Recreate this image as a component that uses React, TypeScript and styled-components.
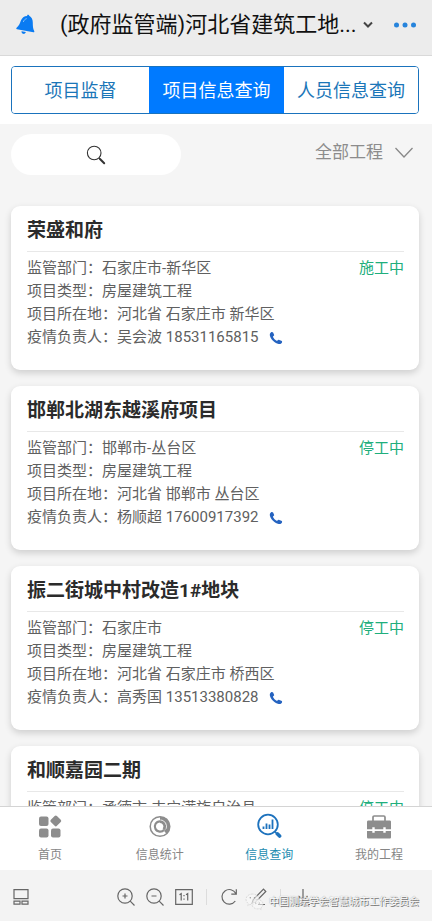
import React from "react";
import styled, { createGlobalStyle, css } from "styled-components";

const GlobalStyle = createGlobalStyle`
  *, *::before, *::after { box-sizing: border-box; }
  html, body, #root { height: 100%; }
  body {
    margin: 0;
    background: #f5f5f5;
    font-family: Roboto, "Noto Sans CJK SC", sans-serif;
    color: #606060;
  }
  button, input, select { font: inherit; color: inherit; }
`;

const Screen = styled.div`
  display: flex;
  flex-direction: column;
  height: 100vh;
  overflow: hidden;
`;

const iconButton = css`
  display: flex;
  align-items: center;
  justify-content: center;
  flex: none;
  padding: 0;
  border: 0;
  background: none;
  cursor: pointer;
`;

const TopBar = styled.header`
  display: flex;
  align-items: center;
  flex: none;
  height: 56px;
  padding: 0 15px 6px 13px;
  background: #ececec;
  border-bottom: 1px solid #d9d9d9;
`;

const TopButton = styled.button`
  ${iconButton}
  width: 24px;
  height: 24px;
`;

const PageTitle = styled.h1`
  flex: 1;
  min-width: 0;
  margin: 0 4px 0 23px;
  overflow: hidden;
  white-space: nowrap;
  font-size: 22px;
  line-height: 32px;
  font-weight: 400;
  color: #111;
`;

const TitleArrow = styled(TopButton)`
  width: 12px;
  margin-right: 19px;
`;

const TabStrip = styled.div`
  flex: none;
  padding: 10px 13px 10px 11px;
  background: #fff;
`;

const Tabs = styled.div`
  display: grid;
  grid-template-columns: 137fr 135fr 134fr;
  height: 48px;
  border: 1px solid #1a73bd;
  border-radius: 4px;
  overflow: hidden;
`;

const Tab = styled.button<{ $active?: boolean }>`
  padding: 0 0 2px;
  border: 0;
  background: ${(p) => (p.$active ? "#007aff" : "#fff")};
  color: ${(p) => (p.$active ? "#fff" : "#1b76b8")};
  font-size: 18px;
  white-space: nowrap;
  cursor: pointer;
`;

const FilterBar = styled.div`
  display: flex;
  align-items: center;
  justify-content: space-between;
  flex: none;
  padding: 10px 18px 10px 11px;
`;

const SearchBox = styled.label`
  display: grid;
  place-items: center;
  flex: 0 1 170px;
  height: 41px;
  background: #fff;
  border-radius: 21px;

  & > * { grid-area: 1 / 1; }
`;

const SearchInput = styled.input`
  width: 100%;
  height: 100%;
  padding: 0 18px;
  border: 0;
  border-radius: 21px;
  background: transparent;
  font-size: 15px;
`;

const FilterLabel = styled.label`
  display: flex;
  align-items: center;
  gap: 11px;
  margin-bottom: 6px;
  color: #8c8c8c;
`;

const FilterSelect = styled.select`
  appearance: none;
  padding: 0;
  border: 0;
  background: transparent;
  font-size: 17px;
  line-height: 24px;
`;

const CardList = styled.main`
  display: flex;
  flex-direction: column;
  flex: 1;
  gap: 16px;
  min-height: 0;
  padding: 21px 13px 16px 11px;
  overflow-y: auto;
  scrollbar-width: none;
`;

const Card = styled.article`
  flex: none;
  padding: 10px 15px 21px 16px;
  background: #fff;
  border-radius: 9px;
  box-shadow: 0 3px 7px rgba(0, 0, 0, 0.16);
`;

const CardTitle = styled.h2`
  margin: 0 0 5px;
  padding-bottom: 6px;
  border-bottom: 1px solid #e8e8e8;
  font-size: 19px;
  line-height: 29px;
  font-weight: 700;
  color: #2b2b2b;
`;

const Row = styled.div`
  display: flex;
  align-items: center;
  height: 23px;
  font-size: 15px;
  line-height: 23px;
  white-space: nowrap;
`;

const Status = styled.span`
  margin-left: auto;
  color: #20ae7c;
`;

const CallLink = styled.a`
  display: flex;
  margin-left: 10px;
  color: #2563c0;
`;

const NavBar = styled.nav`
  display: flex;
  justify-content: space-between;
  flex: none;
  height: 64px;
  padding: 5px 29px 0 26px;
  background: #fff;
  border-top: 1px solid #d4d4d4;
`;

const NavItem = styled.a<{ $active?: boolean }>`
  display: flex;
  flex-direction: column;
  align-items: center;
  gap: 6px;
  width: 48px;
  font-size: 12px;
  line-height: 18px;
  white-space: nowrap;
  text-decoration: none;
  color: ${(p) => (p.$active ? "#1c8cb0" : "#858585")};
`;

const Toolbar = styled.footer`
  position: relative;
  display: grid;
  grid-template-columns: 1fr auto 1fr;
  align-items: center;
  flex: none;
  height: 51px;
  padding: 2px 15px 0 12px;
  background: #f3f3f3;
`;

const ToolGroup = styled.div`
  display: flex;
  align-items: center;
  gap: 11px;
`;

const ToolButton = styled.button`
  ${iconButton}
  width: 18px;
  height: 20px;
  color: #666;
`;

const Divider = styled.span`
  width: 1px;
  height: 16px;
  margin: 0 2px;
  background: #dcdcdc;
`;

const Watermark = styled.div`
  position: absolute;
  right: 13px;
  bottom: 9px;
  display: flex;
  align-items: center;
  gap: 5px;
  font-size: 10px;
  line-height: 20px;
  white-space: nowrap;
  color: #fff;
  text-shadow: 1px 1px 0 #777, 0 0 1px #888;
  pointer-events: none;
`;

const projects = [
  { name: "荣盛和府", dept: "石家庄市-新华区", area: "河北省 石家庄市 新华区", person: "吴会波", phone: "18531165815", status: "施工中" },
  { name: "邯郸北湖东越溪府项目", dept: "邯郸市-丛台区", area: "河北省 邯郸市 丛台区", person: "杨顺超", phone: "17600917392", status: "停工中" },
  { name: "振二街城中村改造1#地块", dept: "石家庄市", area: "河北省 石家庄市 桥西区", person: "高秀国", phone: "13513380828", status: "停工中" },
  { name: "和顺嘉园二期", dept: "承德市-丰宁满族自治县", area: "河北省 承德市 丰宁满族自治县", person: "", phone: "", status: "停工中" },
];

const BellIcon = () => (
  <svg width="20" height="21" viewBox="0 0 20 21" fill="#0a7bf2" aria-hidden="true">
    <path d="M12.2 1.1c.6-.6 1.9-.3 2 .7 2.400 1.300 3.700 3.800 3.600 7 0 3.200.1 5.800 1.500 8.500.2.700-.2 1.100-.9 1L2 15.200c-.8-.2-1-.9-.4-1.400C3.800 12 4.800 9.700 5.700 7.100c1.100-3.300 3.500-5 6.500-5.100z" />
    <path d="M6.500 17.200l4.400.9c-.5 1.400-1.500 2-2.700 1.700-1.100-.3-1.700-1.200-1.700-2.600z" />
    <path d="M8.300 8c.7-2 1.800-3 3.400-3.400" fill="none" stroke="#8cc4fb" strokeWidth="0.900" />
  </svg>
);

const SearchIcon = () => (
  <svg width="20" height="20" viewBox="0 0 20 20" fill="none" stroke="#333" aria-hidden="true">
    <circle cx="8.200" cy="8" r="6.800" strokeWidth="1.100" />
    <path d="M13 13l1 1" strokeWidth="1.200" />
    <path d="M14 14l4.200 4.200" strokeWidth="2" strokeLinecap="round" />
  </svg>
);

const PhoneIcon = () => (
  <svg width="14" height="14" viewBox="0 0 14 14" fill="currentColor" aria-hidden="true">
    <path d="M2.100 1.300c.7-.5 1.500-.4 2 .3l.9 1.900c.3.700.1 1.200-.5 1.600-.6.500-.6.800-.2 1.500.7 1.300 1.600 2.300 2.900 3 .7.400 1 .3 1.500-.3.400-.6.900-.7 1.600-.4l2 .9c.9.400 1 1.100.6 1.900-.8 1.300-2.300 1.600-4 1C5 11.300 1.800 8.100.9 4.700.6 3.300 1 2.100 2.100 1.300z" />
  </svg>
);

const HomeIcon = () => (
  <svg width="24" height="28" viewBox="0 0 24 28" fill="#8d8d8d" aria-hidden="true">
    <rect x="1" y="4.500" width="9.500" height="9.500" rx="2" />
    <rect x="1" y="16.500" width="9.500" height="9" rx="2" />
    <rect x="13" y="16.500" width="9.500" height="9" rx="2" />
    <rect x="13.500" y="4.600" width="8.600" height="8.600" rx="1.600" transform="rotate(45 17.800 8.900)" />
  </svg>
);

const StatsIcon = () => (
  <svg width="24" height="28" viewBox="0 0 24 28" fill="none" aria-hidden="true">
    <circle cx="12" cy="14.500" r="9.800" stroke="#8d8d8d" strokeWidth="1.500" />
    <path d="M12 4.700a9.800 9.800 0 0 1 6.500 17.100L12 14.500z" fill="#8d8d8d" />
    <circle cx="12" cy="14.500" r="6.300" fill="#fff" />
    <path d="M12 9.300a5.200 5.200 0 1 0 4.200 8.300" stroke="#8d8d8d" strokeWidth="2.200" />
    <path d="M12 8.200a6.300 6.300 0 0 1 5 10l-2.300-1.600a3.500 3.500 0 0 0-2.700-5.600z" fill="#8d8d8d" />
    <path d="M12.500 7.800a6.700 6.700 0 0 1 5.700 9" stroke="#fff" strokeWidth="0.700" />
  </svg>
);

const QueryIcon = () => (
  <svg width="26" height="28" viewBox="0 0 26 28" fill="none" stroke="#1d72bd" aria-hidden="true">
    <circle cx="12" cy="12.500" r="9.800" strokeWidth="1.800" />
    <path d="M7.500 14.500v2.500M10.500 11.500v5.500M13.500 12.500v4.500M16.500 7.500v9.500" strokeWidth="1.800" />
    <path d="M18.800 19.500l1.500 1.500" strokeWidth="1.500" />
    <path d="M21.300 21.800l2.300 2.300" strokeWidth="3.600" strokeLinecap="round" />
  </svg>
);

const CaseIcon = () => (
  <svg width="26" height="28" viewBox="0 0 26 28" fill="#8d8d8d" aria-hidden="true">
    <path d="M7 9V5.200c0-.8.4-1.200 1.200-1.200h9.600c.8 0 1.200.4 1.200 1.200V9" fill="none" stroke="#8d8d8d" strokeWidth="1.700" />
    <path d="M2.500 8.500h21c1 0 1.500.5 1.500 1.500v7.300H1V10c0-1 .5-1.500 1.500-1.500z" />
    <path d="M1 19h24v6c0 1-.5 1.500-1.500 1.500h-21c-1 0-1.500-.5-1.500-1.500z" />
    <path d="M6.300 15.200h2.400v5.600H6.300zM17.300 15.200h2.400v5.600h-2.400z" fill="#fff" />
  </svg>
);

const ToolSvg = ({ children }: { children: React.ReactNode }) => (
  <svg width="18" height="18" viewBox="0 0 18 18" fill="none" stroke="currentColor" strokeWidth="1.200" aria-hidden="true">
    {children}
  </svg>
);

const WechatIcon = () => (
  <svg width="19" height="18" viewBox="0 0 19 18" fill="#f8f8f8" fillOpacity="0.600" stroke="#cfcfcf" strokeWidth="0.700" strokeDasharray="2 1" aria-hidden="true">
    <path d="M7.500 1C3.800 1 1 3.400 1 6.400c0 1.700.9 3.200 2.400 4.200l-.6 2 2.300-1.200c.8.200 1.500.3 2.400.3 3.700 0 6.500-2.300 6.500-5.300S11.200 1 7.500 1z" />
    <path d="M12.500 6.500c-3.100 0-5.500 2-5.500 4.700s2.400 4.700 5.500 4.700c.7 0 1.300-.1 1.900-.3l2 1-.5-1.700c1.300-.9 2.100-2.200 2.100-3.700 0-2.700-2.400-4.700-5.500-4.700z" />
    <g fill="#999" fillOpacity="1" stroke="none">
      <circle cx="5.300" cy="4.800" r=".7" /><circle cx="9.500" cy="4.800" r=".7" />
      <circle cx="10.700" cy="10" r=".6" /><circle cx="14.300" cy="10" r=".6" />
    </g>
  </svg>
);

export default function App() {
  return (
    <Screen>
      <GlobalStyle />
      <TopBar>
        <TopButton aria-label="通知"><BellIcon /></TopButton>
        <PageTitle>(政府监管端)河北省建筑工地...</PageTitle>
        <TitleArrow aria-label="展开">
          <svg width="12" height="10" viewBox="0 0 12 10" fill="none" stroke="#444" strokeWidth="2" aria-hidden="true">
            <path d="M2 2.500l4 4 4-4" />
          </svg>
        </TitleArrow>
        <TopButton aria-label="更多">
          <svg width="24" height="6" viewBox="0 0 24 6" fill="#2684dc" aria-hidden="true">
            <circle cx="3.500" cy="3" r="2.500" /><circle cx="12" cy="3" r="2.500" /><circle cx="20.500" cy="3" r="2.500" />
          </svg>
        </TopButton>
      </TopBar>

      <TabStrip>
        <Tabs>
          <Tab>项目监督</Tab>
          <Tab $active>项目信息查询</Tab>
          <Tab>人员信息查询</Tab>
        </Tabs>
      </TabStrip>

      <FilterBar>
        <SearchBox>
          <SearchInput type="text" aria-label="搜索" />
          <SearchIcon />
        </SearchBox>
        <FilterLabel>
          <FilterSelect aria-label="工程筛选" defaultValue="all">
            <option value="all">全部工程</option>
          </FilterSelect>
          <svg width="20" height="14" viewBox="0 0 20 14" fill="none" stroke="#888" strokeWidth="1.300" aria-hidden="true">
            <path d="M1.500 3l8.500 9 8.500-9" />
          </svg>
        </FilterLabel>
      </FilterBar>

      <CardList>
        {projects.map((p) => (
          <Card key={p.name}>
            <CardTitle>{p.name}</CardTitle>
            <Row>监管部门：{p.dept}<Status>{p.status}</Status></Row>
            <Row>项目类型：房屋建筑工程</Row>
            <Row>项目所在地：{p.area}</Row>
            <Row>
              疫情负责人：{p.person} {p.phone}
              {p.phone && (
                <CallLink href={`tel:${p.phone}`} aria-label="拨打电话"><PhoneIcon /></CallLink>
              )}
            </Row>
          </Card>
        ))}
      </CardList>

      <NavBar>
        <NavItem href="#home"><HomeIcon />首页</NavItem>
        <NavItem href="#stats"><StatsIcon />信息统计</NavItem>
        <NavItem href="#query" $active><QueryIcon />信息查询</NavItem>
        <NavItem href="#mine"><CaseIcon />我的工程</NavItem>
      </NavBar>

      <Toolbar>
        <ToolButton aria-label="缩略图">
          <ToolSvg><path d="M2 1.600h14v9H2zM2 13.100h6v3H2zM10 13.100h6v3h-6z" /></ToolSvg>
        </ToolButton>
        <ToolGroup>
          <ToolButton aria-label="放大">
            <ToolSvg><circle cx="8" cy="8" r="7.200" /><path d="M13.200 13.200L17.500 17.500M5.500 8h5M8 5.500v5" /></ToolSvg>
          </ToolButton>
          <ToolButton aria-label="缩小">
            <ToolSvg><circle cx="8" cy="8" r="7.200" /><path d="M13.200 13.200L17.500 17.500M5.500 8h5" /></ToolSvg>
          </ToolButton>
          <ToolButton aria-label="原始大小">
            <ToolSvg>
              <path d="M.7 1.600h16.600v14.800H.7z" />
              <path d="M4.500 6.700L6.200 5.600v7M11 6.700l1.700-1.100v7M9 7v1.300M9 10.500v1.300" />
            </ToolSvg>
          </ToolButton>
          <Divider />
          <ToolButton aria-label="旋转">
            <ToolSvg><path d="M15.800 5.500A7.300 7.300 0 1 0 15.300 13M16.300 1.300v4.900h-5" /></ToolSvg>
          </ToolButton>
          <ToolButton aria-label="编辑">
            <ToolSvg><path d="M14.500 1.200l2.300 2.300L6.500 14l-3.300 1 1-3.300zM9 16.500h7" /></ToolSvg>
          </ToolButton>
          <Divider />
          <ToolButton aria-label="下载">
            <ToolSvg><path d="M9 1v11M4.500 8L9 12.500 13.500 8M2 16.500h14" /></ToolSvg>
          </ToolButton>
        </ToolGroup>
        <Watermark><WechatIcon />中国测绘学会智慧城市工作委员会</Watermark>
      </Toolbar>
    </Screen>
  );
}
